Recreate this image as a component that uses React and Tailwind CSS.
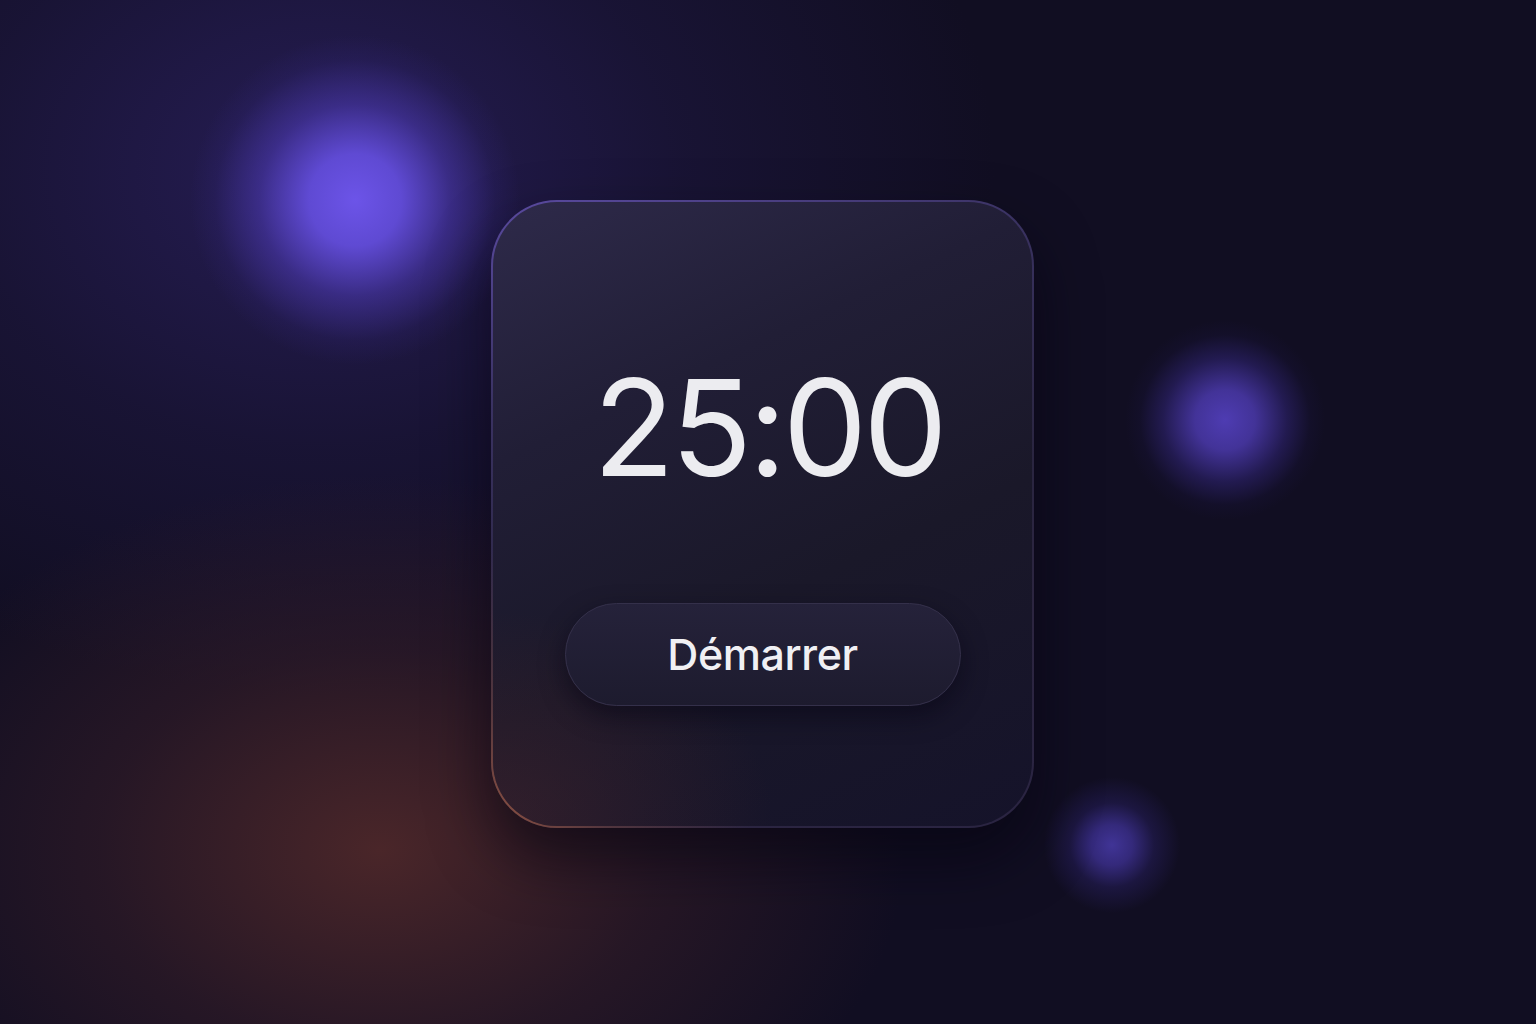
import React from "react";

export default function App() {
  return (
    <div className="relative w-[1536px] h-[1024px] overflow-hidden bg-[#110e22]" style={{ fontFamily: "Inter, 'Noto Sans', sans-serif" }}>
      {/* background tints and glowing blobs */}
      <div className="absolute inset-0 bg-[radial-gradient(ellipse_900px_700px_at_320px_170px,#261d55_0%,rgba(32,25,70,0.5)_40%,rgba(17,14,34,0)_75%)]" />
      <div className="absolute inset-0 bg-[radial-gradient(ellipse_700px_500px_at_380px_850px,#4a2629_0%,rgba(55,30,40,0.55)_40%,rgba(17,14,34,0)_75%)]" />
      <div className="absolute inset-0 bg-[radial-gradient(circle_165px_at_355px_200px,rgba(108,84,232,1)_0%,rgba(100,78,222,0.92)_28%,rgba(82,62,192,0.5)_58%,rgba(60,45,150,0.15)_85%,rgba(40,30,100,0)_100%)]" />
      <div className="absolute inset-0 bg-[radial-gradient(circle_100px_at_1225px_420px,rgba(78,60,178,1)_0%,rgba(72,55,165,0.9)_30%,rgba(60,45,150,0.4)_62%,rgba(40,30,110,0.1)_85%,rgba(30,25,80,0)_100%)]" />
      <div className="absolute inset-0 bg-[radial-gradient(circle_68px_at_1112px_845px,rgba(64,52,150,1)_0%,rgba(58,46,138,0.85)_30%,rgba(48,38,120,0.35)_62%,rgba(30,25,80,0)_100%)]" />

      <div className="relative flex h-full w-full items-center justify-center pr-[11px] pt-[3px]">
        <div className="relative w-[543px] h-[628px] rounded-[66px] p-[2px] bg-[linear-gradient(160deg,#5a4aa0_0%,#3a3262_25%,#2a2540_55%,#2c2540_75%,#2a2442_100%)] shadow-[0_30px_60px_rgba(5,4,15,0.6)]">
          <div className="absolute inset-0 rounded-[66px] bg-[radial-gradient(ellipse_260px_280px_at_0%_100%,rgba(150,85,65,0.9)_0%,rgba(120,70,60,0.5)_45%,rgba(0,0,0,0)_100%)]" />
          <div className="relative flex h-full w-full flex-col items-center rounded-[64px] bg-[linear-gradient(155deg,#2e2a4a_0%,#211e36_30%,#1a1829_60%,#15132a_100%)]">
            <div className="absolute inset-0 rounded-[64px] bg-[radial-gradient(ellipse_400px_300px_at_0px_620px,rgba(80,40,45,0.45),rgba(0,0,0,0)_70%)]" />
            <div className="relative mt-[158px] pl-[12px] text-[134px] leading-none font-normal tracking-[-0.03em] text-[#ececf0]">25:00</div>
            <button className="relative mt-[109px] flex h-[103px] w-[396px] items-center justify-center rounded-full border border-[#34304a] bg-[linear-gradient(180deg,#25223a_0%,#1d1b2e_100%)] text-[43px] font-medium tracking-[-0.01em] text-[#f0f0f4] shadow-[0_10px_24px_rgba(8,6,20,0.55)]">
              Démarrer
            </button>
          </div>
        </div>
      </div>
    </div>
  );
}
